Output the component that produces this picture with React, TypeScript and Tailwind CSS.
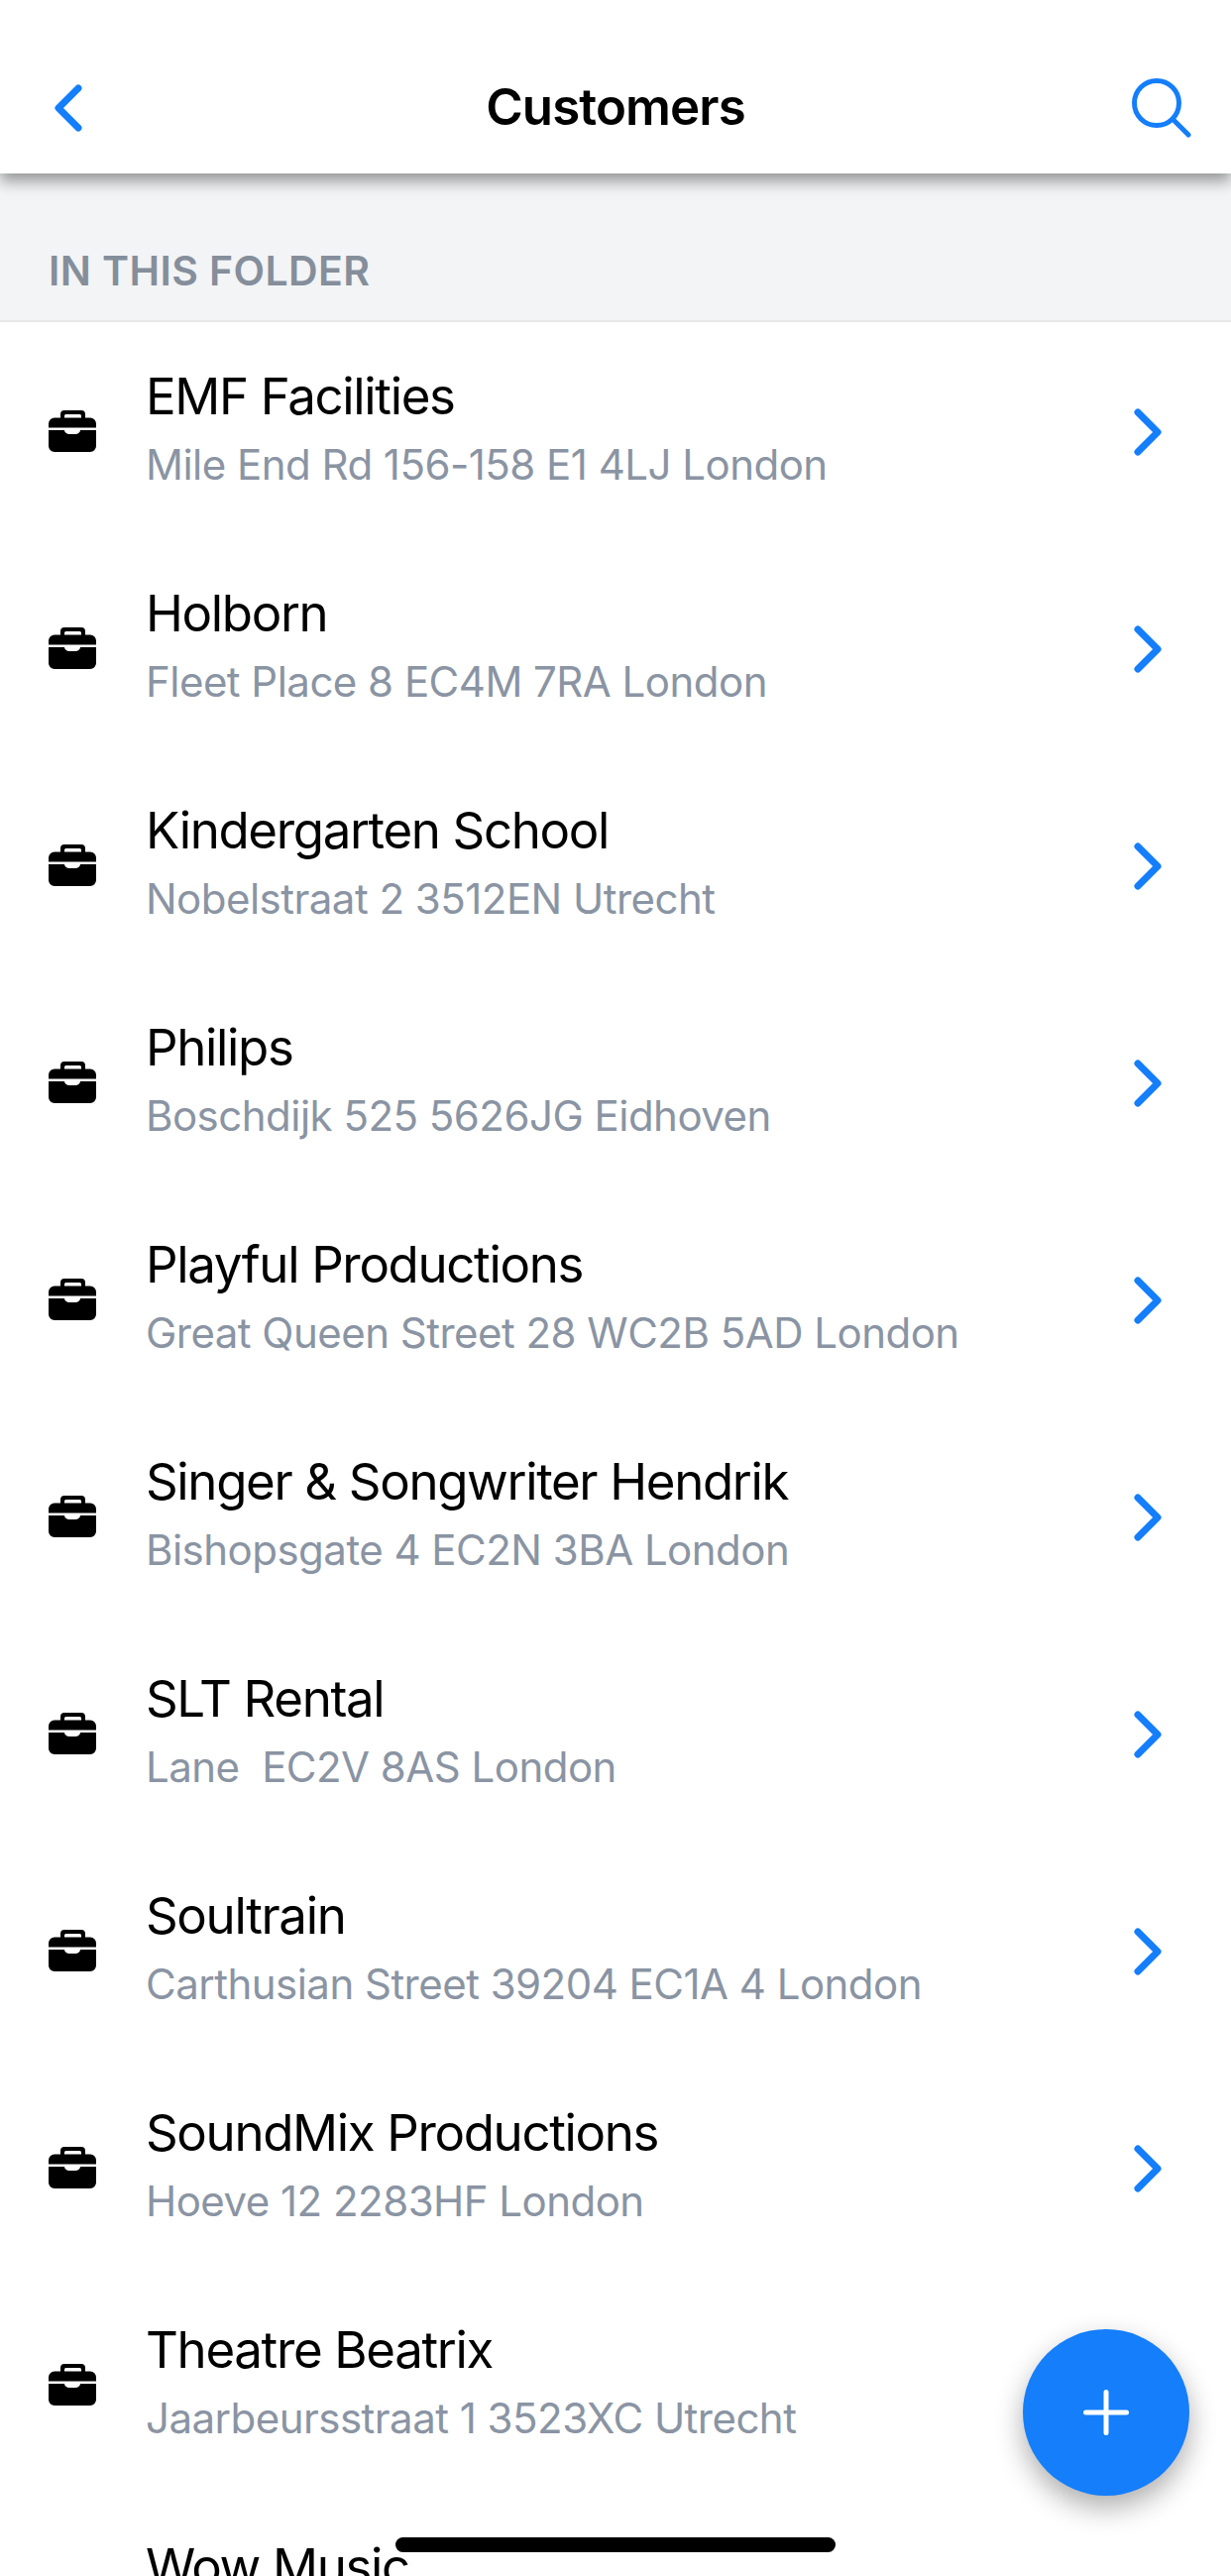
const customers = [
  { name: "EMF Facilities", address: "Mile End Rd 156-158 E1 4LJ London" },
  { name: "Holborn", address: "Fleet Place 8 EC4M 7RA London" },
  { name: "Kindergarten School", address: "Nobelstraat 2 3512EN Utrecht" },
  { name: "Philips", address: "Boschdijk 525 5626JG Eidhoven" },
  { name: "Playful Productions", address: "Great Queen Street 28 WC2B 5AD London" },
  { name: "Singer & Songwriter Hendrik", address: "Bishopsgate 4 EC2N 3BA London" },
  { name: "SLT Rental", address: "Lane\u00a0 EC2V 8AS London" },
  { name: "Soultrain", address: "Carthusian Street 39204 EC1A 4 London" },
  { name: "SoundMix Productions", address: "Hoeve 12 2283HF London" },
  { name: "Theatre Beatrix", address: "Jaarbeursstraat 1 3523XC Utrecht" },
  { name: "Wow Music", address: "" },
];

function Briefcase() {
  return (
    <svg width="48" height="42" viewBox="0 0 48 42" className="shrink-0">
      <path
        fillRule="evenodd"
        fill="#000"
        d="M16 0h17a4 4 0 0 1 4 4v4H33V5.5a1.5 1.5 0 0 0-1.5-1.5h-14A1.5 1.5 0 0 0 16 5.5V8H12V4a4 4 0 0 1 4-4Z"
      />
      <path fill="#000" d="M6 7.500h36a6 6 0 0 1 6 6v4H0v-4a6 6 0 0 1 6-6Z" />
      <path
        fill="#000"
        d="M0 20h16a5 4 0 0 0 5 4h6a5 4 0 0 0 5-4h16v16a6 6 0 0 1-6 6H6a6 6 0 0 1-6-6Z"
      />
    </svg>
  );
}

function Row({ name, address }: { name: string; address: string }) {
  return (
    <div className="flex h-[219px] items-center pl-[49px] pr-[70px]">
      <Briefcase />
      <div className="ml-[50px] min-w-0 flex-1 pb-[2px]">
        <p className="text-[51px] leading-[69px] tracking-[-1.35px] text-black">{name}</p>
        <p className="h-[69px] text-[42px] leading-[69px] tracking-[-0.52px] text-[#8a94a3]">{address}</p>
      </div>
      <svg width="28" height="48" viewBox="0 0 28 48" fill="none" className="mt-[3px] shrink-0">
        <path d="M4 4L24 24L4 44" stroke="#147efb" strokeWidth="7" strokeLinecap="round" strokeLinejoin="round" />
      </svg>
    </div>
  );
}

export default function App() {
  return (
    <div className="relative h-[2599px] w-[1242px] overflow-hidden bg-white font-['Inter',sans-serif]">
      <header className="relative z-10 grid h-[175px] grid-cols-[1fr_auto_1fr] items-center bg-white pb-[1px] px-[55px] pt-[44px] shadow-[0_8px_14px_rgba(0,0,0,0.38)]">
        <svg width="28" height="48" viewBox="0 0 28 48" fill="none">
          <path d="M24 4L4 24L24 44" stroke="#147efb" strokeWidth="7" strokeLinecap="round" strokeLinejoin="round" />
        </svg>
        <h1 className="mb-[3px] text-[51px] font-semibold leading-none tracking-[-0.9px] text-black">Customers</h1>
        <svg width="60" height="60" viewBox="0 0 60 60" fill="none" className="mr-[-15px] justify-self-end">
          <circle cx="25" cy="25" r="22.500" stroke="#147efb" strokeWidth="5" />
          <path d="M41 41L57 57" stroke="#147efb" strokeWidth="5" strokeLinecap="round" />
        </svg>
      </header>

      <div className="flex h-[150px] items-center border-b-2 border-[#e6e8ea] bg-[#f2f4f6] pl-[49px] pt-[48px]">
        <span className="text-[41px] font-semibold leading-none tracking-[0.4px] text-[#858e9b]">IN THIS FOLDER</span>
      </div>

      <div>
        {customers.map((c) => (
          <Row key={c.name} name={c.name} address={c.address} />
        ))}
      </div>

      <button className="absolute left-[1032px] top-[2350px] flex h-[168px] w-[168px] items-center justify-center rounded-full bg-[#147efb] shadow-[0_12px_28px_rgba(0,0,0,0.32)]">
        <svg width="46" height="46" viewBox="0 0 46 46" fill="none">
          <path d="M23 2.500V43.500M2.500 23H43.500" stroke="#fff" strokeWidth="5" strokeLinecap="round" />
        </svg>
      </button>

      <div className="absolute left-[399px] top-[2560px] h-[15px] w-[444px] rounded-full bg-black" />
    </div>
  );
}
